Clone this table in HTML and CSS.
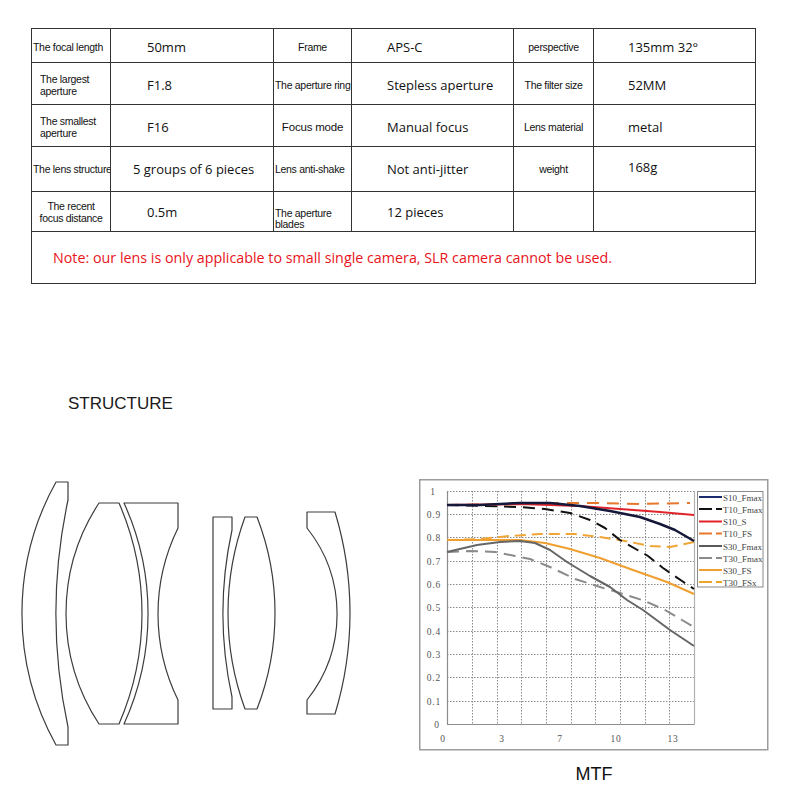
FILE: index.html
```html
<!DOCTYPE html>
<html lang="en">
<head>
<meta charset="utf-8">
<title>Lens specifications</title>
<link rel="stylesheet" href="styles.css">
</head>
<body>
<table class="specs">
  <colgroup>
    <col class="c1"><col class="c2"><col class="c3"><col class="c4"><col class="c5"><col class="c6">
  </colgroup>
  <tr class="r1">
    <td class="lbl fit">The focal length</td>
    <td class="val">50mm</td>
    <td class="lbl">Frame</td>
    <td class="val v4">APS-C</td>
    <td class="lbl">perspective</td>
    <td class="val v6">135mm 32°</td>
  </tr>
  <tr class="r2">
    <td class="lbl ind">The largest<br>aperture</td>
    <td class="val">F1.8</td>
    <td class="lbl fit">The aperture ring</td>
    <td class="val v4">Stepless aperture</td>
    <td class="lbl">The filter size</td>
    <td class="val v6">52MM</td>
  </tr>
  <tr class="r3">
    <td class="lbl ind">The smallest<br>aperture</td>
    <td class="val">F16</td>
    <td class="lbl big">Focus mode</td>
    <td class="val v4">Manual focus</td>
    <td class="lbl">Lens material</td>
    <td class="val v6">metal</td>
  </tr>
  <tr class="r4">
    <td class="lbl fit">The lens structure</td>
    <td class="val wide">5 groups of 6 pieces</td>
    <td class="lbl fit">Lens anti-shake</td>
    <td class="val v4">Not anti-jitter</td>
    <td class="lbl">weight</td>
    <td class="val v6 up">168g</td>
  </tr>
  <tr class="r5">
    <td class="lbl">The recent<br>focus distance</td>
    <td class="val">0.5m</td>
    <td class="lbl fit low">The aperture<br>blades</td>
    <td class="val v4">12 pieces</td>
    <td class="lbl"></td>
    <td class="val v6"></td>
  </tr>
  <tr class="r6">
    <td class="note" colspan="6">Note: our lens is only applicable to small single camera, SLR camera cannot be used.</td>
  </tr>
</table>

<div class="lower">
  <section class="structure">
    <h2 class="title">STRUCTURE</h2>
    <svg class="lenses" width="340" height="272" viewBox="20 478 340 272" xmlns="http://www.w3.org/2000/svg">
      <g fill="none" stroke="#3c3c3c" stroke-width="1.2" stroke-linejoin="round">
        <path d="M56,482 L68,482 L68,500 A543,543 0 0 0 68,727 L68,745 L56,745 A271,271 0 0 1 56,482 Z"/>
        <path d="M99,503 L119,503 A277,277 0 0 1 119,724 L99,724 A201.5,201.5 0 0 1 99,503 Z"/>
        <path d="M124,503 L178,503 L178,528 A195,195 0 0 0 178,700 L178,724 L124,724 A266,266 0 0 0 124,503 Z"/>
        <path d="M213,517 L232,517 L232,530 A392,392 0 0 0 232,697 L232,709 L213,709 Z"/>
        <path d="M245,517 L257,517 A265,265 0 0 1 257,709 L245,709 A279.6,279.6 0 0 1 245,517 Z"/>
        <path d="M307,512 L335,512 A347.5,347.5 0 0 1 335,714 L307,714 L307,700 A138,138 0 0 0 307,528 Z"/>
      </g>
    </svg>
  </section>

  <section class="mtf">
    <svg class="chart" width="350" height="272" viewBox="419 479 350 272" xmlns="http://www.w3.org/2000/svg">
      <rect x="419.75" y="479.75" width="348" height="270" fill="#fff" stroke="#9c9c9c" stroke-width="1.5"/>
      <g stroke="#8a8a8a" stroke-width="1" stroke-dasharray="1.5 1.5" fill="none">
        <line x1="447" y1="701.5" x2="694" y2="701.5"/>
        <line x1="447" y1="677.5" x2="694" y2="677.5"/>
        <line x1="447" y1="654.5" x2="694" y2="654.5"/>
        <line x1="447" y1="631.5" x2="694" y2="631.5"/>
        <line x1="447" y1="607.5" x2="694" y2="607.5"/>
        <line x1="447" y1="584.5" x2="694" y2="584.5"/>
        <line x1="447" y1="561.5" x2="694" y2="561.5"/>
        <line x1="447" y1="537.5" x2="694" y2="537.5"/>
        <line x1="447" y1="514.5" x2="694" y2="514.5"/>
        <line x1="447" y1="491.5" x2="694" y2="491.5"/>
        <line x1="472.5" y1="491" x2="472.5" y2="724"/>
        <line x1="497.5" y1="491" x2="497.5" y2="724"/>
        <line x1="521.5" y1="491" x2="521.5" y2="724"/>
        <line x1="546.5" y1="491" x2="546.5" y2="724"/>
        <line x1="571.5" y1="491" x2="571.5" y2="724"/>
        <line x1="595.5" y1="491" x2="595.5" y2="724"/>
        <line x1="620.5" y1="491" x2="620.5" y2="724"/>
        <line x1="645.5" y1="491" x2="645.5" y2="724"/>
        <line x1="669.5" y1="491" x2="669.5" y2="724"/>
      </g>
      <g stroke="#8c8c8c" stroke-width="1.2" fill="none">
        <line x1="447.5" y1="491" x2="447.5" y2="724.5"/>
        <line x1="447" y1="724.5" x2="694.5" y2="724.5"/>
        <line x1="694.5" y1="491" x2="694.5" y2="724.5" stroke="#b0b0b0"/>
      </g>
      <g class="tick">
        <text x="433" y="494.5" text-anchor="middle">1</text>
        <text x="441" y="517.5" text-anchor="end">0.9</text>
        <text x="441" y="541" text-anchor="end">0.8</text>
        <text x="441" y="564.5" text-anchor="end">0.7</text>
        <text x="441" y="587.5" text-anchor="end">0.6</text>
        <text x="441" y="611" text-anchor="end">0.5</text>
        <text x="441" y="634.5" text-anchor="end">0.4</text>
        <text x="441" y="657.5" text-anchor="end">0.3</text>
        <text x="441" y="681" text-anchor="end">0.2</text>
        <text x="441" y="704.5" text-anchor="end">0.1</text>
        <text x="437" y="727.5" text-anchor="middle">0</text>
        <text x="443" y="742" text-anchor="middle">0</text>
        <text x="502" y="742" text-anchor="middle">3</text>
        <text x="560" y="742" text-anchor="middle">7</text>
        <text x="616" y="742" text-anchor="middle">10</text>
        <text x="673" y="742" text-anchor="middle">13</text>
      </g>
      <g fill="none" stroke-width="2" stroke-linejoin="round" stroke-linecap="butt">
        <polyline stroke="#f0a535" stroke-dasharray="11 6" points="447,540 480,539 510,536 540,534 575,534 600,537 625,541 650,546 670,547 694,542"/>
        <polyline stroke="#f0a030" points="447,540 520,540 545,543 570,549 600,558 633,570 667,582 694,594"/>
        <polyline stroke="#8a8a8a" stroke-dasharray="12 7" points="447,552 470,551 495,552 515,556 530,559 550,567 575,579 600,587 620,593 645,601 665,610 682,620 694,627"/>
        <polyline stroke="#666" points="447,552 477,545 500,542 520,541 535,543 550,550 567,562 590,576 610,587 627,600 643,610 670,630 694,646"/>
        <polyline stroke="#111" stroke-dasharray="12 7" points="447,505 520,507 545,509 570,513 590,520 605,528 620,540 648,556 663,568 682,581 694,589"/>
        <polyline stroke="#e8772e" stroke-dasharray="12 8" points="447,505 520,504 560,503 600,503 640,504 690,503"/>
        <polyline stroke="#e0242a" points="447,505 520,504 580,506 620,509 660,512 694,515"/>
        <polyline stroke="#16183a" stroke-width="2.5" points="447,505 480,505 520,503 550,503 580,506 610,511 640,517 660,524 675,530 694,541"/>
      </g>
      <rect x="697.5" y="491.5" width="65.5" height="95.5" fill="#fff" stroke="#8a8a8a" stroke-width="1"/>
      <g stroke-width="2" fill="none">
        <line x1="699" y1="497" x2="722" y2="497" stroke="#1c2a6e"/>
        <line x1="699" y1="509" x2="712" y2="509" stroke="#111"/>
        <line x1="716" y1="509" x2="722" y2="509" stroke="#111"/>
        <line x1="699" y1="521.5" x2="722" y2="521.5" stroke="#e0242a"/>
        <line x1="699" y1="533.5" x2="712" y2="533.5" stroke="#e8772e"/>
        <line x1="716" y1="533.5" x2="722" y2="533.5" stroke="#e8772e"/>
        <line x1="699" y1="546" x2="722" y2="546" stroke="#5a5a5a"/>
        <line x1="699" y1="558" x2="712" y2="558" stroke="#8a8a8a"/>
        <line x1="716" y1="558" x2="722" y2="558" stroke="#8a8a8a"/>
        <line x1="699" y1="570" x2="722" y2="570" stroke="#f0a030"/>
        <line x1="699" y1="582" x2="712" y2="582" stroke="#eaa52a"/>
        <line x1="716" y1="582" x2="722" y2="582" stroke="#eaa52a"/>
      </g>
      <g class="leg">
        <text x="723" y="500.5">S10_Fmax</text>
        <text x="723" y="512.5">T10_Fmax</text>
        <text x="723" y="525">S10_S</text>
        <text x="723" y="537">T10_FS</text>
        <text x="723" y="549.5">S30_Fmax</text>
        <text x="723" y="561.5">T30_Fmax</text>
        <text x="723" y="573.5">S30_FS</text>
        <text x="723" y="585.5">T30_FSx</text>
      </g>
    </svg>
    <p class="caption">MTF</p>
  </section>
</div>
</body>
</html>
```

FILE: styles.css
```css
html, body {
  margin: 0;
  padding: 0;
  background: #fff;
}

body {
  font-family: "Liberation Sans", Arial, sans-serif;
  color: #111;
}

.specs {
  margin: 28px 0 0 31px;
  width: 724px;
  table-layout: fixed;
  border-collapse: collapse;
}

.specs .c1 { width: 79px; }
.specs .c2 { width: 163px; }
.specs .c3 { width: 78px; }
.specs .c4 { width: 162px; }
.specs .c5 { width: 80px; }
.specs .c6 { width: 162px; }

.specs td {
  border: 1px solid #333;
  padding: 0;
  vertical-align: middle;
  overflow: hidden;
  white-space: nowrap;
}

.specs .r1 td { height: 30px; padding-top: 3px; }
.specs .r2 td { height: 38px; padding-top: 3px; }
.specs .r3 td { height: 38px; padding-top: 3px; }
.specs .r4 td { height: 40px; }
.specs .r5 td { height: 37px; padding-top: 1px; }
.specs .r6 td { height: 51px; }

.specs .lbl {
  font-family: "Liberation Sans", Arial, sans-serif;
  font-size: 10.5px;
  letter-spacing: -0.3px;
  line-height: 12px;
  text-align: center;
  color: #111;
}

.specs .lbl.fit {
  text-align: left;
  padding-left: 1px;
}

.specs .lbl.ind {
  text-align: left;
  padding-left: 8px;
}

.specs .lbl.big {
  font-size: 11.5px;
  letter-spacing: -0.2px;
}

.specs .lbl.low {
  vertical-align: bottom;
  padding-bottom: 1px;
  line-height: 11px;
}

.specs .val {
  font-family: "Open Sans", "Noto Sans", sans-serif;
  font-size: 13px;
  line-height: 16px;
  color: #111;
  text-align: left;
  padding-left: 36px;
}

.specs .val.wide { padding-left: 22px; }
.specs .val.v4 { padding-left: 35px; }
.specs .val.v6 { padding-left: 34px; }
.specs .r4 .val.up { padding-bottom: 4px; }

.specs .note {
  font-family: "Open Sans", "Noto Sans", sans-serif;
  font-size: 14.3px;
  color: #e8141c;
  padding-left: 21px;
  text-align: left;
}

.lower {
  display: flex;
  margin-top: 110px;
}

.structure {
  width: 419px;
  padding-left: 20px;
  box-sizing: border-box;
}

.title {
  margin: 0 0 0 48px;
  font-family: "Liberation Sans", Arial, sans-serif;
  font-weight: normal;
  font-size: 17px;
  line-height: 20px;
  color: #1a1a1a;
}

.lenses {
  display: block;
  margin-top: 64px;
}

.mtf {
  padding-top: 85px;
  width: 350px;
}

.chart {
  display: block;
}

.tick {
  font-family: "Liberation Serif", "DejaVu Serif", serif;
  font-size: 9.5px;
  letter-spacing: 0.8px;
  fill: #555;
}

.leg {
  font-family: "Liberation Serif", "DejaVu Serif", serif;
  font-size: 9px;
  fill: #444;
}

.caption {
  margin: 13px 0 0 0;
  text-align: center;
  font-family: "Liberation Sans", Arial, sans-serif;
  font-size: 18px;
  line-height: 20px;
  color: #111;
}
```
